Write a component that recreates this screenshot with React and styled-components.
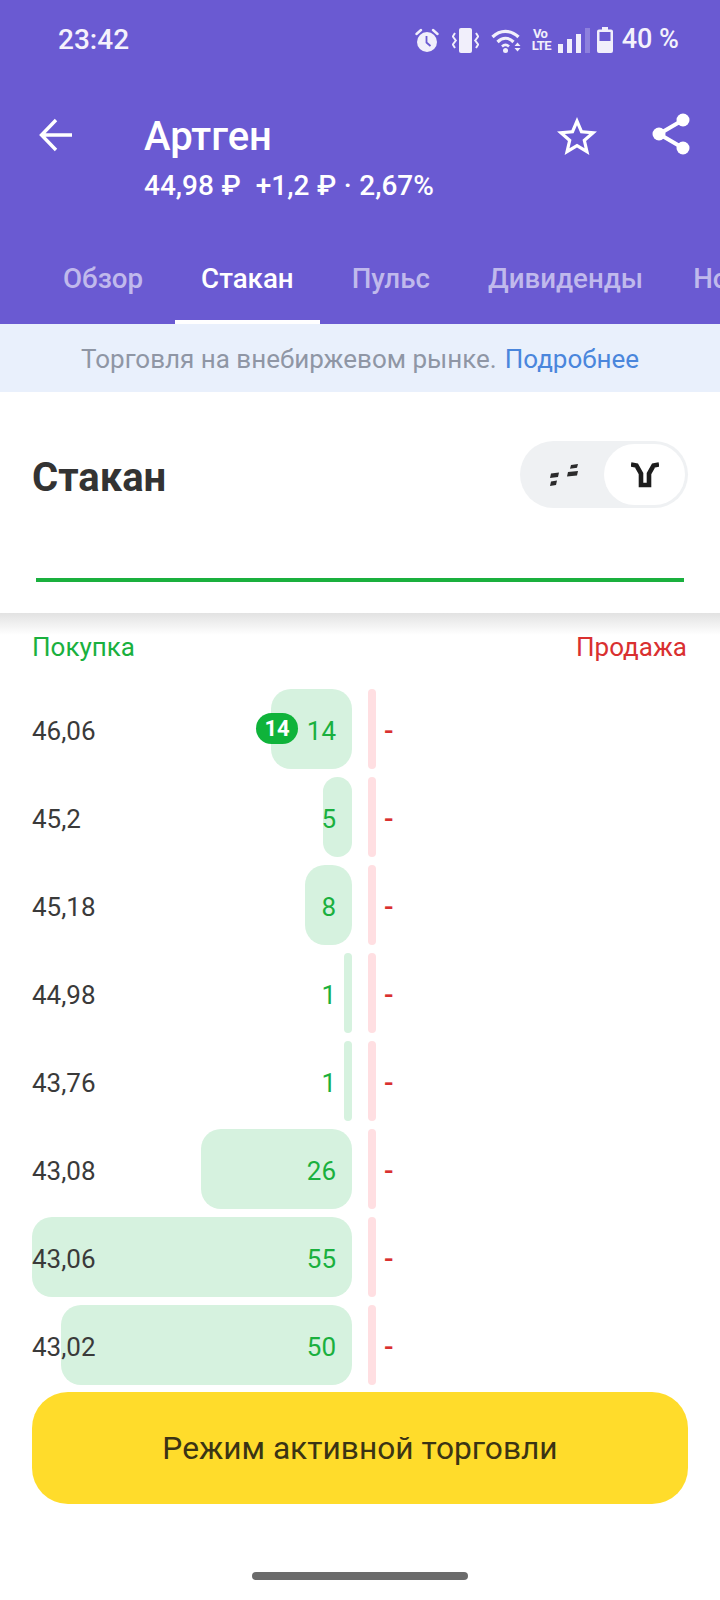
import React from 'react'
import styled, { createGlobalStyle } from 'styled-components'

const orders = [
  { price: '46,06', qty: 14, mine: 14 },
  { price: '45,2', qty: 5 },
  { price: '45,18', qty: 8 },
  { price: '44,98', qty: 1 },
  { price: '43,76', qty: 1 },
  { price: '43,08', qty: 26 },
  { price: '43,06', qty: 55 },
  { price: '43,02', qty: 50 },
]

const tabs = ['Обзор', 'Стакан', 'Пульс', 'Дивиденды', 'Новости']

const barWidth = qty => Math.max(8, Math.round(qty * 5.82))

const AlarmIcon = () => (
  <svg width='24' height='25' viewBox='0 0 24 25' fill='#f1effb'>
    <circle cx='12' cy='14' r='10' />
    <path d='M1.500 6 6 2M22.500 6 18 2' stroke='#f1effb' strokeWidth='2.400' strokeLinecap='round' />
    <path d='M11.500 8v6.500l4 3.500' stroke='#6a5ad2' strokeWidth='1.800' fill='none' />
  </svg>
)

const VibrateIcon = () => (
  <svg width='27' height='25' viewBox='0 0 27 25' fill='none'>
    <rect x='7' y='0' width='13' height='25' rx='2' fill='#f1effb' />
    <path d='M3 5 .8 8.500 3.800 12.500.8 16.500 3 20M24 5l2.200 3.500-3 4 3 4L24 20' stroke='#f1effb' strokeWidth='2' />
  </svg>
)

const WifiIcon = () => (
  <svg width='31' height='25' viewBox='0 0 31 25' fill='none'>
    <path d='M1.500 9C9 1.500 20 1.500 27.500 9' stroke='#f1effb' strokeWidth='3.200' />
    <path d='M6.500 14c5-5 11-5 16 0' stroke='#f1effb' strokeWidth='3.200' />
    <path d='M11 18.500c2.500-2.300 4.500-2.300 7 0' stroke='#f1effb' strokeWidth='2.600' />
    <circle cx='14.500' cy='22.500' r='2.500' fill='#f1effb' />
    <path d='M23.500 18 26.500 14.500l3 3.500zM23.500 20l3 3.500 3-3.500z' fill='#f1effb' />
  </svg>
)

const SignalIcon = () => (
  <svg width='32' height='25' viewBox='0 0 32 25'>
    <rect x='0' y='16' width='5' height='9' fill='#f1effb' />
    <rect x='9' y='11' width='5' height='14' fill='#f1effb' />
    <rect x='18' y='6' width='5' height='19' fill='#f1effb' />
    <rect x='27' y='0' width='5' height='25' fill='#8d80dd' />
  </svg>
)

const BatteryIcon = () => (
  <svg width='16' height='26' viewBox='0 0 16 26'>
    <path d='M5 0h6v2.500h3a2 2 0 0 1 2 2V24a2 2 0 0 1-2 2H2a2 2 0 0 1-2-2V4.500a2 2 0 0 1 2-2h3z' fill='#f1effb' />
    <rect x='2.500' y='5' width='11' height='9' fill='#6a5ad2' />
  </svg>
)

const BackIcon = () => (
  <svg width='34' height='34' viewBox='0 0 34 34' fill='none'>
    <path d='M33 17H3M17 2 2.500 17 17 32' stroke='#fff' strokeWidth='3.400' />
  </svg>
)

const StarIcon = () => (
  <svg width='48' height='48' viewBox='0 0 24 24' fill='#fff'>
    <path d='M22 9.240l-7.190-.620L12 2 9.190 8.630 2 9.240l5.460 4.730L5.820 21 12 17.270 18.180 21l-1.630-7.030L22 9.240zM12 15.400l-3.760 2.270 1-4.280-3.320-2.880 4.380-.380L12 6.100l1.710 4.040 4.380.380-3.320 2.880 1 4.280L12 15.400z' />
  </svg>
)

const ShareIcon = () => (
  <svg width='38' height='42' viewBox='0 0 38 42' fill='#fff'>
    <path d='M31 7 7 21l24 14' stroke='#fff' strokeWidth='4' fill='none' />
    <circle cx='31' cy='7' r='6.500' />
    <circle cx='7' cy='21' r='6.500' />
    <circle cx='31' cy='35' r='6.500' />
  </svg>
)

const DashesIcon = () => (
  <svg width='30' height='22' viewBox='0 0 30 22' fill='#2b2b2b'>
    <path d='M2 9.500 10 8.500 9 13 1 14zM2 17.500l6-1-1 4.500-6 1zM22 1l7-1-1 3.800-7 1zM19 8l10-1-1 4.500-10 1z' />
  </svg>
)

const DepthIcon = () => (
  <svg width='28' height='26' viewBox='0 0 28 26' fill='none'>
    <path d='M0 2.500 5.500 3.500 10 11.500V23h8V11.500L22.500 3.500 28 2.500' stroke='#1d1d1d' strokeWidth='4.600' />
  </svg>
)

const App = () => {
  return (
    <Screen>
      <GlobalStyle />
      <Header>
        <StatusBar>
          <Clock>23:42</Clock>
          <StatusIcons>
            <AlarmIcon />
            <VibrateIcon />
            <WifiIcon />
            <VoLte>Vo<br />LTE</VoLte>
            <SignalIcon />
            <BatteryIcon />
            <BatteryLevel>40 %</BatteryLevel>
          </StatusIcons>
        </StatusBar>
        <TopBar>
          <BackButton><BackIcon /></BackButton>
          <Instrument>
            <h1>Артген</h1>
            <p>44,98 ₽&nbsp;&nbsp;+1,2 ₽ · 2,67%</p>
          </Instrument>
          <Actions>
            <StarIcon />
            <ShareIcon />
          </Actions>
        </TopBar>
        <Tabs>
          {tabs.map(tab => (
            <Tab key={tab} $active={tab === 'Стакан'}>{tab}</Tab>
          ))}
        </Tabs>
      </Header>
      <Notice>
        Торговля на внебиржевом рынке. <a>Подробнее</a>
      </Notice>
      <BookHead>
        <BookTitle>
          <h2>Стакан</h2>
          <Toggle>
            <ToggleOption><DashesIcon /></ToggleOption>
            <ToggleOption $active><DepthIcon /></ToggleOption>
          </Toggle>
        </BookTitle>
        <Ratio />
      </BookHead>
      <Sides>
        <Side $color='#1ab03e'>Покупка</Side>
        <Side $color='#d93030'>Продажа</Side>
      </Sides>
      <Book>
        {orders.map(order => (
          <Row key={order.price}>
            <BuyCell>
              <Price>{order.price}</Price>
              <Bar style={{ width: barWidth(order.qty) }}>
                {order.mine && <Badge>{order.mine}</Badge>}
              </Bar>
              <Qty>{order.qty}</Qty>
            </BuyCell>
            <SellBar />
            <SellQty>-</SellQty>
          </Row>
        ))}
      </Book>
      <TradeButton>Режим активной торговли</TradeButton>
      <HomeIndicator />
    </Screen>
  )
}

const GlobalStyle = createGlobalStyle`
  html, body {
    margin: 0;
    background: #fff;
  }
  * {
    box-sizing: border-box;
  }
`

const Screen = styled.div`
  width: 720px;
  height: 1600px;
  overflow: hidden;
  display: flex;
  flex-direction: column;
  background: #fff;
  font-family: Roboto, "Noto Sans", sans-serif;
`

const Header = styled.header`
  height: 324px;
  display: flex;
  flex-direction: column;
  background: #6a5ad2;
  color: #fff;
`

const StatusBar = styled.div`
  height: 80px;
  display: flex;
  align-items: center;
  justify-content: space-between;
  padding: 0 41px 0 58px;
`

const Clock = styled.span`
  padding-bottom: 2px;
  font-size: 28px;
  font-weight: 500;
  color: #f4f2fc;
`

const StatusIcons = styled.div`
  display: flex;
  align-items: center;
  gap: 9px;
  > :nth-child(1) {
    margin-right: 4px;
  }
  > :nth-child(2) {
    margin-right: 3px;
  }
  > :nth-child(3) {
    margin-right: 1px;
  }
  > :nth-child(5) {
    margin-right: -2px;
  }
`

const VoLte = styled.span`
  width: 17px;
  font-size: 13px;
  line-height: 12px;
  font-weight: 700;
  letter-spacing: -0.5px;
  text-align: center;
  color: #f1effb;
`

const BatteryLevel = styled.span`
  padding-bottom: 2px;
  font-size: 27px;
  font-weight: 500;
  color: #f4f2fc;
`

const TopBar = styled.div`
  height: 96px;
  display: flex;
  padding: 0 30px 0 39px;
`

const BackButton = styled.div`
  width: 105px;
  padding-top: 38px;
`

const Instrument = styled.div`
  flex: 1;
  padding-top: 34px;
  h1 {
    margin: 0;
    font-size: 40px;
    line-height: 46px;
    font-weight: 500;
  }
  p {
    margin: 9px 0 0;
    font-size: 28px;
    line-height: 34px;
    font-weight: 500;
    word-spacing: 0.6px;
  }
`

const Actions = styled.div`
  display: flex;
  align-items: flex-start;
  gap: 51px;
  padding-top: 33px;
`

const Tabs = styled.nav`
  margin-top: auto;
  height: 72px;
  display: flex;
  gap: 6px;
  padding-left: 37px;
  overflow: hidden;
`

const Tab = styled.div`
  flex: none;
  padding: 0 26px 16px;
  display: flex;
  align-items: center;
  font-size: 27.700px;
  font-weight: 500;
  color: ${props => (props.$active ? '#fff' : '#c0b9ec')};
  border-bottom: 4px solid ${props => (props.$active ? '#fff' : 'transparent')};
  &:last-child {
    margin-left: -8px;
  }
`

const Notice = styled.div`
  height: 68px;
  padding-top: 2px;
  display: flex;
  align-items: center;
  justify-content: center;
  gap: 8px;
  background: #e9f0fc;
  font-size: 26px;
  color: #8f96a5;
  a {
    color: #4a86dc;
  }
`

const BookHead = styled.section`
  height: 221px;
  display: flex;
  flex-direction: column;
  background: #fff;
`

const BookTitle = styled.div`
  height: 186px;
  padding: 49px 32px 0;
  display: flex;
  justify-content: space-between;
  align-items: flex-start;
  h2 {
    margin: 14px 0 0;
    font-size: 40px;
    line-height: 46px;
    font-weight: 700;
    color: #333;
  }
`

const Toggle = styled.div`
  width: 168px;
  height: 67px;
  padding: 3px;
  display: flex;
  border-radius: 34px;
  background: #eff1f3;
`

const ToggleOption = styled.div`
  flex: 1;
  display: flex;
  align-items: center;
  justify-content: center;
  border-radius: 31px;
  background: ${props => (props.$active ? '#fff' : 'transparent')};
`

const Ratio = styled.div`
  height: 4px;
  margin: 0 36px;
  background: #1ab03e;
`

const Sides = styled.div`
  display: flex;
  justify-content: space-between;
  padding: 20px 33px 0 32px;
  height: 76px;
  background: linear-gradient(#e2e2e2, #fff 22px);
`

const Side = styled.span`
  font-size: 26px;
  line-height: 28px;
  color: ${props => props.$color};
`

const Book = styled.div`
  display: flex;
  flex-direction: column;
  gap: 8px;
  padding: 0 32px;
`

const Row = styled.div`
  height: 80px;
  display: flex;
  align-items: center;
`

const BuyCell = styled.div`
  width: 320px;
  height: 100%;
  display: grid;
  align-items: center;
  > * {
    grid-area: 1 / 1;
  }
`

const Price = styled.span`
  z-index: 1;
  justify-self: start;
  padding-top: 4px;
  font-size: 26px;
  color: #3a3a3a;
`

const Bar = styled.div`
  position: relative;
  height: 100%;
  justify-self: end;
  border-radius: 20px;
  background: #d6f2df;
`

const Badge = styled.span`
  position: absolute;
  top: 24px;
  left: -15px;
  width: 42px;
  height: 31px;
  display: flex;
  align-items: center;
  justify-content: center;
  border-radius: 16px;
  background: #0fb33a;
  font-size: 22px;
  font-weight: 700;
  color: #fff;
`

const Qty = styled.span`
  z-index: 1;
  justify-self: end;
  margin-right: 16px;
  padding-top: 4px;
  font-size: 26px;
  color: #1ab03e;
`

const SellBar = styled.div`
  width: 8px;
  height: 100%;
  margin-left: 16px;
  border-radius: 4px;
  background: #ffdfe2;
`

const SellQty = styled.span`
  margin-left: 8px;
  padding-top: 2px;
  font-size: 28px;
  font-weight: 500;
  color: #d93030;
`

const TradeButton = styled.button`
  flex: none;
  height: 112px;
  margin: 7px 32px 0;
  border: 0;
  border-radius: 36px;
  background: #ffdc2b;
  font-family: inherit;
  font-size: 31.700px;
  color: #3b3414;
`

const HomeIndicator = styled.div`
  flex: none;
  width: 216px;
  height: 8px;
  margin: 68px auto 0;
  border-radius: 4px;
  background: #6b6b6b;
`

export default App
